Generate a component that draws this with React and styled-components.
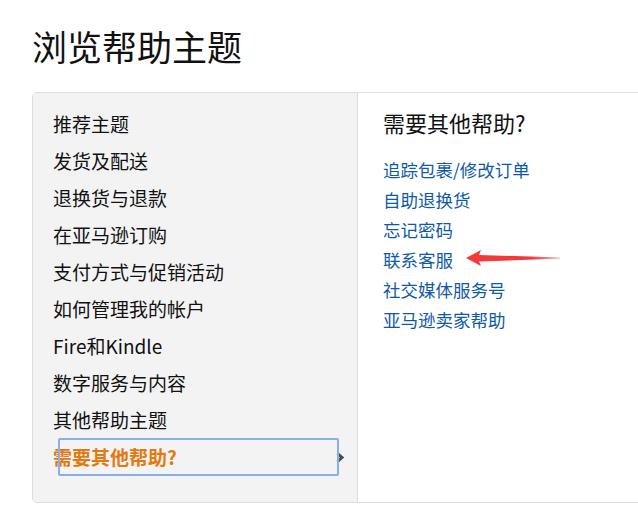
import React from 'react';
import styled, { createGlobalStyle } from 'styled-components';

const GlobalStyle = createGlobalStyle`
    html, body {
        margin: 0;
        padding: 0;
        background: #fff;
        overflow: hidden;
    }
    body {
        font-family: "Noto Sans CJK SC", "Noto Sans", "Liberation Sans", sans-serif;
        color: #111;
    }
`;

const Page = styled.div`
    position: relative;
    width: 638px;
    height: 511px;
    overflow: hidden;
    padding: 22px 0 0 32px;
    box-sizing: border-box;
`;

const Title = styled.h1`
    margin: 0;
    font-size: 35px;
    font-weight: 400;
    line-height: 48px;
`;

const Card = styled.div`
    display: flex;
    width: 680px;
    margin-top: 22px;
    border: 1px solid #dddddd;
    border-radius: 5px;
    overflow: hidden;
`;

const SideNav = styled.ul`
    list-style: none;
    margin: 0;
    width: 325px;
    flex-shrink: 0;
    padding: 12px 0 27px 20px;
    box-sizing: border-box;
    background: #f3f3f3;
    border-right: 1px solid #dddddd;
`;

const NavItem = styled.li`
    position: relative;
    display: flex;
    align-items: center;
    justify-content: space-between;
    width: 291px;
    height: 37px;
    font-size: 19px;
    color: ${props => (props.active ? '#e47911' : '#111')};
    font-weight: ${props => (props.active ? 700 : 400)};
    &::after {
        content: '';
        display: ${props => (props.active ? 'block' : 'none')};
        position: absolute;
        left: 5px;
        right: 5px;
        top: 0;
        bottom: -1px;
        border: 2px solid #86aef2;
        border-radius: 2px;
    }
`;

const Chevron = styled.svg`
    width: 8px;
    height: 11px;
    margin-top: 2px;
`;

const Panel = styled.div`
    flex: 1;
    padding: 14px 0 0 25px;
`;

const PanelTitle = styled.h2`
    margin: 0 0 18px;
    font-size: 22px;
    font-weight: 400;
    line-height: 30px;
    color: #111;
`;

const LinkList = styled.ul`
    list-style: none;
    margin: 0;
    padding: 0;
`;

const HelpLink = styled.li`
    height: 30px;
    line-height: 30px;
    font-size: 17.5px;
    color: #0f5aa8;
`;

const Arrow = styled.svg`
    position: absolute;
    left: 460px;
    top: 245px;
    width: 105px;
    height: 25px;
`;

const topics = [
    '推荐主题',
    '发货及配送',
    '退换货与退款',
    '在亚马逊订购',
    '支付方式与促销活动',
    '如何管理我的帐户',
    'Fire和Kindle',
    '数字服务与内容',
    '其他帮助主题',
];

const links = [
    '追踪包裹/修改订单',
    '自助退换货',
    '忘记密码',
    '联系客服',
    '社交媒体服务号',
    '亚马逊卖家帮助',
];

export default function App() {
    return (
        <Page>
            <GlobalStyle />
            <Title>浏览帮助主题</Title>
            <Card>
                <SideNav>
                    {topics.map(t => (
                        <NavItem key={t}>{t}</NavItem>
                    ))}
                    <NavItem active>
                        <span>需要其他帮助?</span>
                        <Chevron viewBox="0 0 8 11">
                            <path d="M1.5 1.5 L6 5.5 L1.5 9.5" fill="none" stroke="#4a4a4a" strokeWidth="3" />
                        </Chevron>
                    </NavItem>
                </SideNav>
                <Panel>
                    <PanelTitle>需要其他帮助?</PanelTitle>
                    <LinkList>
                        {links.map(l => (
                            <HelpLink key={l}>{l}</HelpLink>
                        ))}
                    </LinkList>
                </Panel>
            </Card>
            <Arrow viewBox="0 0 105 25">
                <defs>
                    <linearGradient id="fade" x1="0" x2="1" y1="0" y2="0">
                        <stop offset="0.7" stopColor="#f23a3a" />
                        <stop offset="1" stopColor="#f23a3a" stopOpacity="0.4" />
                    </linearGradient>
                </defs>
                <path d="M6 13 L21 5 L19 10 L100 12.4 L100 13.6 L19 16.5 L21 21 Z" fill="url(#fade)" />
            </Arrow>
        </Page>
    );
}
